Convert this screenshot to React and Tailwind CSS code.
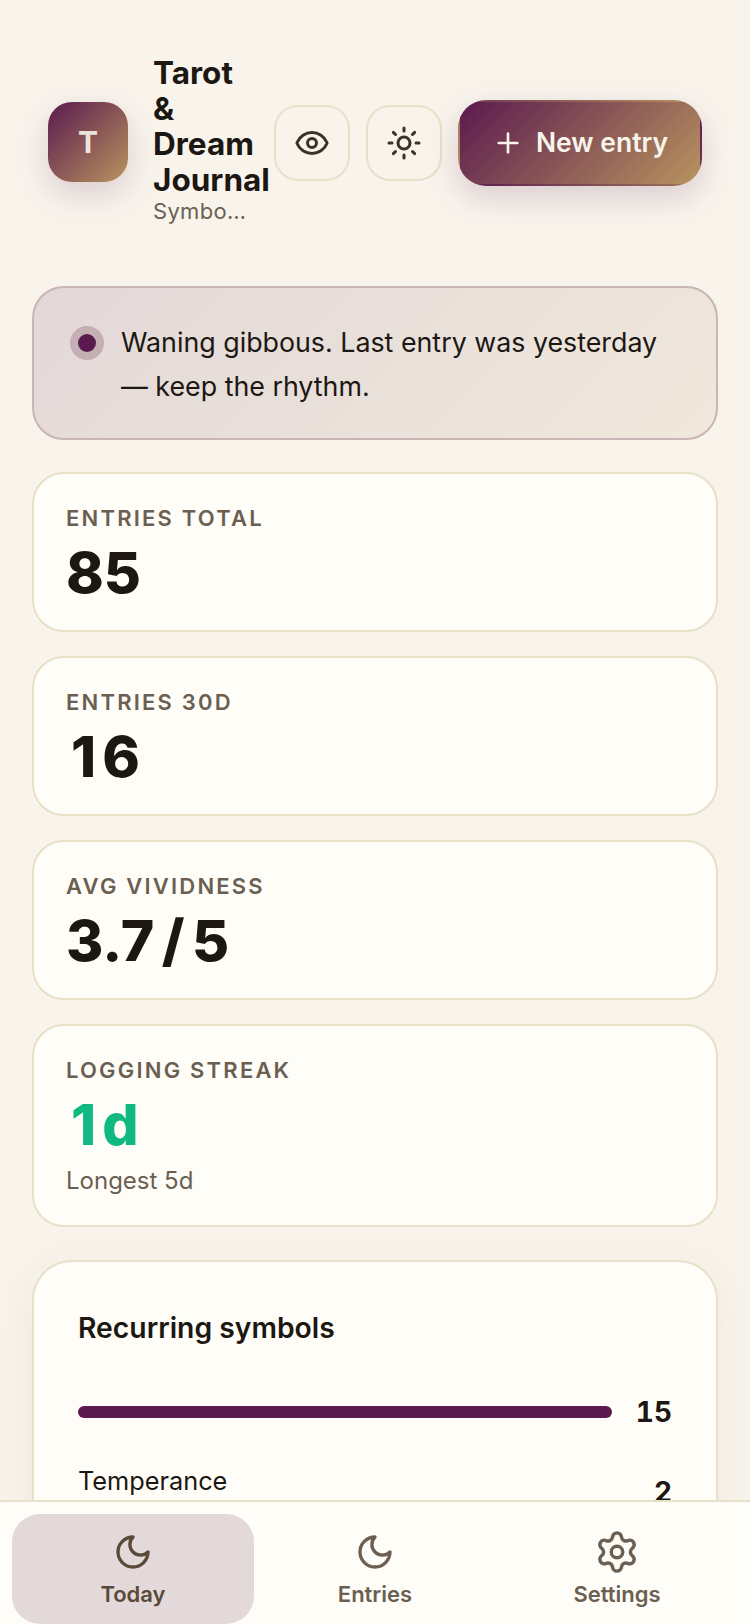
import React from 'react';
import { Eye, Sun, Plus, Settings } from 'lucide-react';

const MoonIcon = () => (
  <svg width="40" height="40" viewBox="0 0 24 24" fill="none" stroke="currentColor" strokeWidth="2" strokeLinecap="round" strokeLinejoin="round">
    <path d="M12 3a6 6 0 0 0 9 9 9 9 0 1 1-9-9Z" />
  </svg>
);

const GearIcon = () => <Settings size={46} strokeWidth={1.8} className="-my-[3px]" />;

const stats = [
  { label: 'ENTRIES TOTAL', value: '85' },
  { label: 'ENTRIES 30D', value: '16', wideOne: true },
  { label: 'AVG VIVIDNESS', value: '3.7 / 5' },
  { label: 'LOGGING STREAK', value: '1d', wideOne: true, accent: true, note: 'Longest 5d' }
];

const navItems = [
  { label: 'Today', icon: MoonIcon, active: true },
  { label: 'Entries', icon: MoonIcon },
  { label: 'Settings', icon: GearIcon }
];

const StatCard = ({ label, value, accent, note, wideOne }) => (
  <div className="rounded-[32px] border-2 border-[#e8e0c8] bg-[#fffdf7] px-[32px] pt-[28px] pb-[23px]">
    <div className="text-[22px] leading-[32px] font-semibold tracking-[2.2px] text-[#6b5f52]">{label}</div>
    <div
      className={`mt-[5px] text-[57px] leading-[68px] font-extrabold [word-spacing:-5px] ${
        wideOne ? 'pl-[5px] tracking-[6px]' : ''
      } ${accent ? 'text-[#10b981]' : 'text-[#1c1712]'}`}
    >
      {value}
    </div>
    {note && <div className="text-[24px] leading-[43px] text-[#6b5f52]">{note}</div>}
  </div>
);

const App = () => {
  return (
    <div className="flex h-[1624px] w-[750px] flex-col overflow-hidden bg-[#f8f4ec] font-['Inter',sans-serif] text-[#1c1712]">
      <main className="min-h-0 flex-1 overflow-hidden px-[32px]">
        {/* Header */}
        <header className="flex items-center pt-[55px] pb-[57px] pl-[16px]">
          <div className="flex h-[80px] w-[80px] shrink-0 items-center justify-center rounded-[24px] bg-[linear-gradient(135deg,#5b1a4e,#b8935f)] text-[30px] font-bold text-[#ece4dc] shadow-[0_12px_32px_rgba(91,26,78,0.18)]">
            T
          </div>
          <div className="ml-[25px] mr-[25px] w-[96px] shrink-0 pb-[4px]">
            <div className="text-[31.5px] leading-[35.5px] font-bold">Tarot &amp; Dream Journal</div>
            <div className="truncate text-[22px] leading-[28px] tracking-[0.3px] text-[#6b5f52]">Symbolic journal</div>
          </div>
          <button className="mt-[2px] flex h-[76px] w-[76px] shrink-0 items-center justify-center rounded-[24px] border-2 border-[#e8e0c8] text-[#3a3128]">
            <Eye size={36} strokeWidth={2} />
          </button>
          <button className="mt-[2px] ml-[16px] flex h-[76px] w-[76px] shrink-0 items-center justify-center rounded-[24px] border-2 border-[#e8e0c8] text-[#3a3128]">
            <Sun size={36} strokeWidth={2} />
          </button>
          <button className="mt-[2px] ml-[16px] flex h-[86px] w-[244px] shrink-0 items-center justify-center gap-[12px] rounded-[28px] border-2 border-transparent bg-[linear-gradient(135deg,#5b1a4e,#b8935f)] text-[26.5px] font-semibold text-[#f8f4ec] shadow-[0_12px_32px_rgba(91,26,78,0.18)]">
            <Plus size={32} strokeWidth={2} />
            New entry
          </button>
        </header>

        {/* Moon notice */}
        <div className="flex rounded-[32px] border-2 border-[#c9b4b6] bg-[linear-gradient(135deg,#e3d8d8,#f0e8dc)] px-[36px] pt-[32px] pb-[30px]">
          <div className="mt-[6px] flex h-[34px] w-[34px] shrink-0 items-center justify-center rounded-full bg-[#c4afb5]">
            <div className="h-[18px] w-[18px] rounded-full bg-[#5b1a4e]" />
          </div>
          <p className="ml-[17px] text-[26.8px] leading-[44px]">Waning gibbous. Last entry was yesterday — keep the rhythm.</p>
        </div>

        <div className="mt-[32px] flex flex-col gap-[24px]">
          {stats.map((s, idx) => (
            <StatCard key={idx} {...s} />
          ))}
        </div>

        {/* Recurring symbols */}
        <section className="mt-[33px] rounded-[40px] border-2 border-[#e8e0c8] bg-[#fffdf7] px-[44px] pt-[48px] pb-[40px] shadow-[0_8px_40px_rgba(60,40,20,0.06)]">
          <h2 className="text-[28.3px] leading-[36px] font-semibold">Recurring symbols</h2>
          <div className="mt-[49px] flex items-center gap-[24px]">
            <div className="h-[12px] flex-1 rounded-full bg-[#5b1a4e]" />
            <span className="text-[28px] leading-[34px] font-bold tabular-nums">15</span>
          </div>
          <div className="mt-[34px] flex items-start justify-between">
            <span className="text-[25.3px] leading-[36px]">Temperance</span>
            <span className="mt-[12px] text-[28px] leading-[34px] font-bold tabular-nums">2</span>
          </div>
          <div className="mt-[24px] h-[12px] w-[60%] rounded-full bg-[#5b1a4e]" />
        </section>
      </main>

      {/* Bottom nav */}
      <nav className="flex h-[124px] shrink-0 border-t-2 border-[#e8e0c8] bg-[#fffdf7] px-[12px] pt-[12px]">
        {navItems.map((item, idx) => {
          const Icon = item.icon;
          return (
            <div
              key={idx}
              className={`flex flex-1 flex-col items-center rounded-[28px] pt-[18px] ${
                item.active ? 'bg-[#e4d9da] text-[#5a4a3a]' : 'text-[#6b5f52]'
              }`}
            >
              <Icon />
              <span className="mt-[8px] text-[22px] leading-[28px] font-semibold">{item.label}</span>
            </div>
          );
        })}
      </nav>
    </div>
  );
};

export default App;
